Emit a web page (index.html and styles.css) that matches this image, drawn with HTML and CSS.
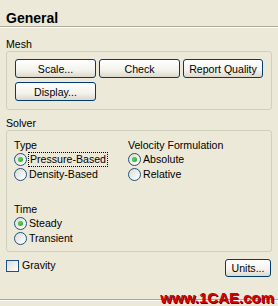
FILE: index.html
```html
<!DOCTYPE html>
<html lang="en">
<head>
  <meta charset="UTF-8" />
  <title>General</title>
  <link rel="stylesheet" href="styles.css">
</head>
<body>
  <div class="panel">
    <div class="title">General</div>

    <div class="group-label">Mesh</div>
    <div class="group mesh">
      <button class="xp-btn">Scale...</button>
      <button class="xp-btn">Check</button>
      <button class="xp-btn">Report Quality</button>
      <button class="xp-btn">Display...</button>
    </div>

    <div class="group-label solver-label">Solver</div>
    <div class="group solver">
      <div class="cols">
        <div class="col type-col">
          <div class="field-label">Type</div>
          <label class="radio"><span class="dot checked"></span><span class="focus">Pressure-Based</span></label>
          <label class="radio"><span class="dot"></span><span>Density-Based</span></label>
        </div>
        <div class="col">
          <div class="field-label">Velocity Formulation</div>
          <label class="radio"><span class="dot checked"></span><span>Absolute</span></label>
          <label class="radio"><span class="dot"></span><span>Relative</span></label>
        </div>
      </div>
      <div class="time">
        <div class="field-label">Time</div>
        <label class="radio"><span class="dot checked"></span><span>Steady</span></label>
        <label class="radio"><span class="dot"></span><span>Transient</span></label>
      </div>
    </div>

    <div class="bottom-row">
      <label class="check"><span class="box"></span><span>Gravity</span></label>
      <button class="xp-btn units">Units...</button>
    </div>

    <div class="separator"></div>
    <div class="actions">
      <div class="xp-btn stub"></div>
    </div>

    <div class="watermark">www.1CAE.com</div>
  </div>
</body>
</html>
```

FILE: styles.css
```css
* {
  box-sizing: border-box;
}
body {
  margin: 0;
  background: #ece9d8;
  font-family: 'Liberation Sans', Arial, sans-serif;
  font-size: 10.6px;
  line-height: 13px;
  color: #000;
  overflow: hidden;
}
.panel {
  position: relative;
  height: 306px;
}
.title {
  padding: 10px 6px 0;
  height: 27px;
  font-size: 14px;
  line-height: 16px;
  font-weight: bold;
  border-bottom: 1px solid #aca899;
  box-shadow: 0 1px 0 #fff;
}
.group-label {
  margin: 11px 6px 0;
  height: 13px;
}
.solver-label {
  margin-top: 7px;
}
.group {
  margin: 0 6px;
  border: 1px solid #d0d0bf;
  border-radius: 3px;
}
.mesh {
  display: grid;
  grid-template-columns: 81px 81px 80px;
  gap: 4px 3px;
  padding: 7px 8px 8px;
}
.xp-btn {
  height: 19px;
  padding: 0;
  white-space: nowrap;
  font-family: inherit;
  font-size: inherit;
  color: #000;
  border: 1px solid #003c74;
  border-radius: 3px;
  background: linear-gradient(#ffffff, #f3f2ec 60%, #dcd8cb);
  cursor: pointer;
}
.solver {
  padding: 8px 7px 5px;
}
.cols {
  display: flex;
}
.type-col {
  width: 114px;
}
.field-label {
  height: 13px;
}
.radio {
  display: flex;
  align-items: center;
  gap: 2px;
  height: 15px;
}
.dot {
  width: 13px;
  height: 13px;
  border: 1px solid #1c5180;
  border-radius: 50%;
  background: linear-gradient(135deg, #dcdcd7, #ffffff);
  display: flex;
  align-items: center;
  justify-content: center;
}
.dot.checked::after {
  content: '';
  width: 5px;
  height: 5px;
  border-radius: 50%;
  background: radial-gradient(circle at 40% 40%, #55d755, #21a121);
}
.focus {
  outline: 1px dotted #000;
  padding: 0 1px;
}
.time {
  margin-top: 21px;
}
.bottom-row {
  display: flex;
  justify-content: space-between;
  align-items: flex-start;
  margin: 7px 7px 0 6px;
}
.check {
  display: flex;
  align-items: center;
  gap: 3px;
  height: 13px;
}
.box {
  width: 13px;
  height: 12px;
  border: 1px solid #1c5180;
  background: linear-gradient(135deg, #dcdcd7, #ffffff);
}
.units {
  width: 46px;
  height: 18px;
}
.separator {
  margin-top: 22px;
  border-top: 1px solid #aca899;
  box-shadow: 0 1px 0 #fff;
}
.actions {
  padding: 6px 8px;
}
.stub {
  width: 28px;
}
.watermark {
  position: absolute;
  right: 4px;
  top: 290px;
  font-size: 15px;
  line-height: 15px;
  font-weight: bold;
  color: #d40000;
  text-shadow: 1px 1px 0 #5a0000;
}
```
